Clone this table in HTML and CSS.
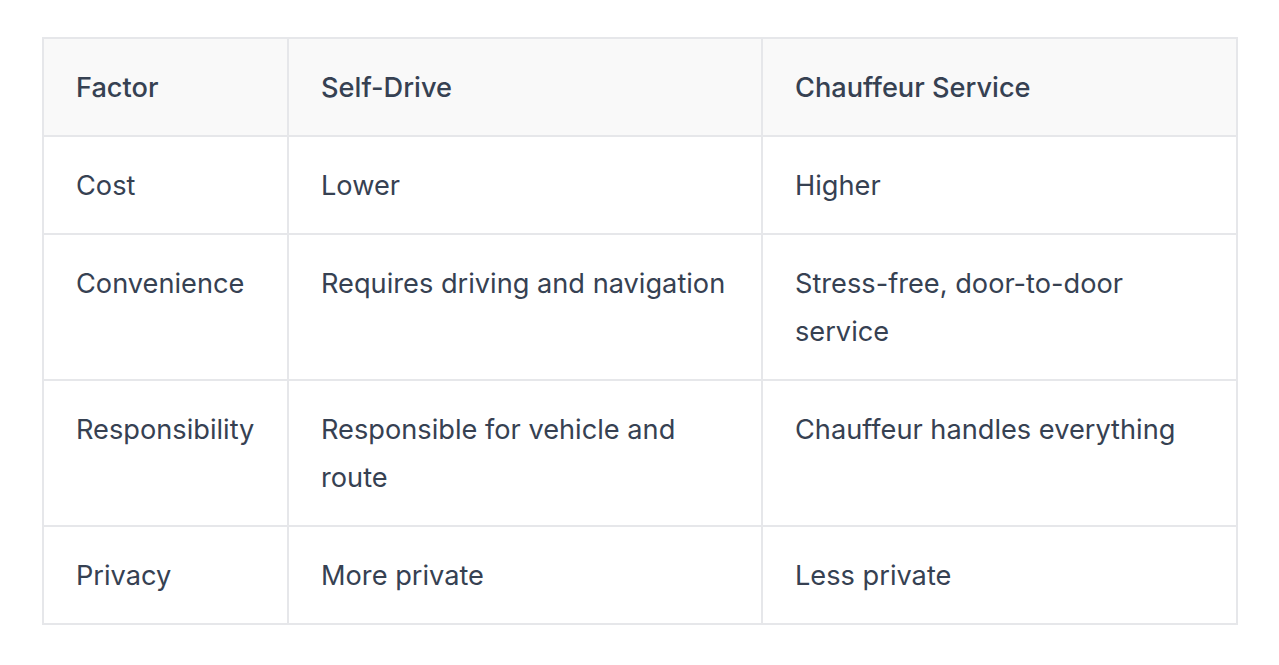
FILE: index.html
```html
<!DOCTYPE html>
<html lang="en">
<head>
<meta charset="utf-8">
<link rel="stylesheet" href="styles.css">
</head>
<body>
<div class="wrap">
<table class="cmp">
  <colgroup>
    <col class="c1">
    <col class="c2">
    <col class="c3">
  </colgroup>
  <thead>
    <tr><th>Factor</th><th>Self-Drive</th><th>Chauffeur Service</th></tr>
  </thead>
  <tbody>
    <tr><td>Cost</td><td>Lower</td><td>Higher</td></tr>
    <tr><td>Convenience</td><td>Requires driving and navigation</td><td>Stress-free, door-to-door service</td></tr>
    <tr><td>Responsibility</td><td>Responsible for vehicle and route</td><td>Chauffeur handles everything</td></tr>
    <tr><td>Privacy</td><td>More private</td><td>Less private</td></tr>
  </tbody>
</table>
</div>
</body>
</html>
```
FILE: styles.css
```css
html, body { margin: 0; padding: 0; background: #fff; }
body { font-family: Inter, "Noto Sans", sans-serif; color: #364152; }
.wrap { padding: 37px 42px 0 42px; }
.cmp {
  width: 1194px;
  border-collapse: collapse;
  table-layout: fixed;
  font-size: 27.2px;
  line-height: 48px;
}
.c1 { width: 245px; }
.c2 { width: 474px; }
.c3 { width: 475px; }
.cmp th, .cmp td {
  border: 2px solid #e6e7ea;
  padding: 25px 31px 23px 32px;
  text-align: left;
  vertical-align: top;
}
.cmp th { background: #f9f9f9; font-weight: 500; }
.cmp td { font-weight: 400; }
```
